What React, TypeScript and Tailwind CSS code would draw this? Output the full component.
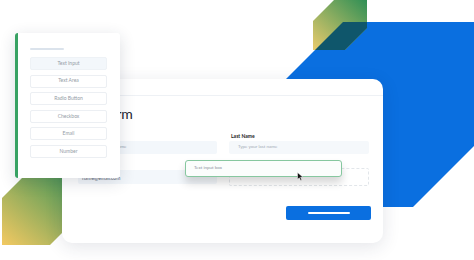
import React from 'react';

const TOOLS = ['Text Input', 'Text Area', 'Radio Button', 'Checkbox', 'Email', 'Number'];

function Backdrop() {
  return (
    <svg className="absolute inset-0" width="474" height="260" viewBox="0 0 474 260">
      <defs>
        <linearGradient id="hexTop" x1="0" y1="1" x2="1" y2="0">
          <stop offset="0" stopColor="#e9cb6c" />
          <stop offset="1" stopColor="#2f8f55" />
        </linearGradient>
        <linearGradient id="hexBottom" x1="0" y1="1" x2="1" y2="0">
          <stop offset="0" stopColor="#f3c962" />
          <stop offset="1" stopColor="#3f9457" />
        </linearGradient>
        <clipPath id="blueClip">
          <polygon points="343,22 480,22 480,140 413,207 250,207 250,115" />
        </clipPath>
      </defs>
      <polygon points="343,22 480,22 480,140 413,207 250,207 250,115" fill="#0a6fe0" />
      <polygon points="313,21 334,0 367,0 367,28 345,50 313,50" fill="url(#hexTop)" />
      <g clipPath="url(#blueClip)">
        <polygon points="313,21 334,0 367,0 367,28 345,50 313,50" fill="#0f566b" />
      </g>
      <polygon points="2,198 22,178 80,178 80,215 50,245 2,245" fill="url(#hexBottom)" />
    </svg>
  );
}

function Cursor() {
  return (
    <svg className="absolute left-[235px] top-[93px]" width="7" height="9" viewBox="0 0 7 9">
      <path d="M0.5 0.5 L0.5 7.5 L2.3 5.8 L3.6 8.5 L4.8 7.9 L3.6 5.3 L6 5.2 Z" fill="#111" stroke="#fff" strokeWidth="0.5" />
    </svg>
  );
}

function FormCard() {
  return (
    <div className="absolute left-[62px] top-[79px] w-[321px] h-[164px] rounded-[10px] bg-white shadow-[0_4px_18px_rgba(30,45,70,0.12)]">
      <div className="h-[17px] border-b border-[#eef1f5]" />
      <div className="pl-[39px] pt-[11px] text-[14px] leading-[14px] text-[#1c2230]">Form</div>
      <div className="grid grid-cols-[139px_140px] gap-x-[12px] pl-[16px] pt-[12px]">
        <div className="flex flex-col gap-[2px]">
          <span className="text-[5px] leading-[6px] font-bold text-[#222]">First Name</span>
          <div className="h-[13px] rounded-[2px] bg-[#f3f7fb] pl-[8px] flex items-center text-[4.5px] text-[#9aa3ad]">Type your first name</div>
        </div>
        <div className="flex flex-col gap-[2px]">
          <span className="pl-[2px] text-[5px] leading-[6px] font-bold text-[#222]">Last Name</span>
          <div className="h-[13px] rounded-[2px] bg-[#f5f8fb] pl-[9px] flex items-center text-[4.5px] text-[#a3abb5]">Type your last name</div>
        </div>
        <div className="mt-[16px] h-[14px] rounded-[2px] bg-[#f3f7fb] pl-[4px] pt-[5px] text-[5px] leading-[6px] text-[#5f6873]">name@email.com</div>
        <div className="mt-[14px] h-[18px] rounded-[2px] border border-dashed border-[#e2e6ea]" />
      </div>
      <div className="flex justify-end pr-[12px] pt-[20px]">
        <div className="w-[85px] h-[14px] rounded-[2px] bg-[#0a6fe0] flex items-center justify-center">
          <div className="w-[42px] h-[2px] rounded-full bg-white" />
        </div>
      </div>
      <div className="absolute left-[123px] top-[81px] w-[157px] h-[17px] rounded-[3px] border border-[#86c79f] bg-[#fbfdfc] shadow-[0_6px_8px_rgba(0,0,0,0.16)] pl-[8px] flex items-center text-[4.5px] text-[#8b949e]">
        Text input box
      </div>
      <Cursor />
    </div>
  );
}

function ToolPanel() {
  return (
    <div className="absolute left-[15px] top-[33px] w-[105px] h-[145px] bg-white rounded-[3px] border-l-[3px] border-[#38a263] shadow-[0_4px_16px_rgba(30,45,70,0.16)] pl-[12px] pt-[15px]">
      <div className="w-[34px] h-[2px] bg-[#dbe3ec] rounded-full" />
      <div className="mt-[7px] flex flex-col gap-[4.6px]">
        {TOOLS.map((t, i) => (
          <div
            key={t}
            className={
              'w-[77px] h-[13px] rounded-[2px] border flex items-center justify-center text-[5px] text-[#949ca6] ' +
              (i === 0 ? 'bg-[#f3f7fb] border-[#eef2f6]' : 'bg-white border-[#eceff3]')
            }
          >
            {t}
          </div>
        ))}
      </div>
    </div>
  );
}

export default function App() {
  return (
    <div className="relative w-[474px] h-[260px] overflow-hidden bg-white" style={{ fontFamily: 'Lato, "Open Sans", sans-serif' }}>
      <Backdrop />
      <FormCard />
      <ToolPanel />
    </div>
  );
}
